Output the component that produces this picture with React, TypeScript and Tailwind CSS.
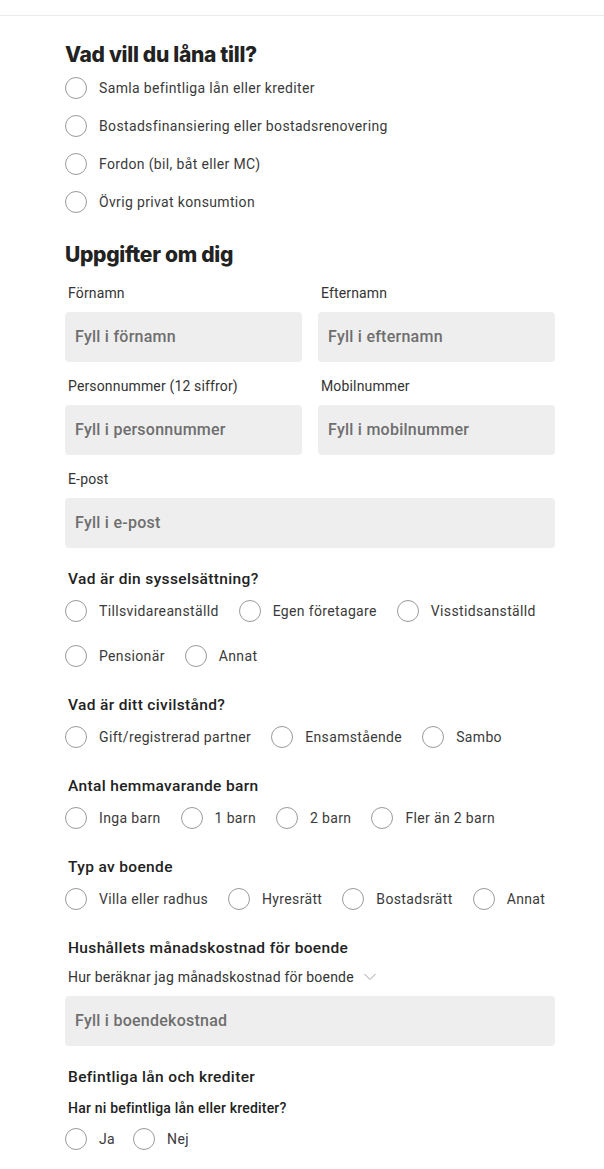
import React from "react";

const body = { fontFamily: "Roboto, 'Noto Sans', sans-serif" };
const head = { fontFamily: "Inter, 'Noto Sans', sans-serif" };

function Radio({ label, className = "" }: { label: string; className?: string }) {
  return (
    <label className={"flex items-center " + className}>
      <span className="w-[22px] h-[22px] rounded-full border border-[#9a9a9a] bg-white shrink-0" />
      <span className="ml-[12px] text-[14px] text-[#3a3a3a] tracking-[0.35px] leading-[20px]">{label}</span>
    </label>
  );
}

function SectionLabel({ children }: { children: React.ReactNode }) {
  return (
    <div className="pl-[3px] text-[15.5px] leading-[22px] font-medium text-[#222] tracking-[0.35px]">{children}</div>
  );
}

function Group({ label, options }: { label: string; options: string[] }) {
  return (
    <div className="mb-[17px]">
      <SectionLabel>{label}</SectionLabel>
      <div className="flex flex-wrap gap-y-[3px] gap-x-[20px]">
        {options.map((o) => (
          <Radio key={o} label={o} className="h-[42px]" />
        ))}
      </div>
    </div>
  );
}

function Input({ placeholder }: { placeholder: string }) {
  return (
    <div className="mt-[9px] h-[50px] rounded-[4px] bg-[#eeeeee] flex items-center px-[10px]">
      <span className="text-[16px] font-medium text-[#6e6e6e] tracking-[0.25px]">{placeholder}</span>
    </div>
  );
}

function Field({ label, placeholder, className = "" }: { label: string; placeholder: string; className?: string }) {
  return (
    <div className={className}>
      <div className="pl-[3px] text-[14px] leading-[20px] text-[#333] tracking-[0.15px]">{label}</div>
      <Input placeholder={placeholder} />
    </div>
  );
}

export default function App() {
  return (
    <div className="w-[604px] min-h-[1169px] bg-white" style={body}>
      <div className="h-[16px] border-b border-[#ebebeb]" />
      <div className="ml-[65px] w-[490px]">
        <h1 className="mt-[25px] text-[21px] leading-[28px] font-extrabold text-[#222] tracking-[-0.3px]" style={head}>
          Vad vill du låna till?
        </h1>
        <div className="flex flex-col">
          {[
            "Samla befintliga lån eller krediter",
            "Bostadsfinansiering eller bostadsrenovering",
            "Fordon (bil, båt eller MC)",
            "Övrig privat konsumtion",
          ].map((o) => (
            <Radio key={o} label={o} className="h-[38px]" />
          ))}
        </div>

        <h2 className="mt-[20px] text-[21px] leading-[28px] font-extrabold text-[#222] tracking-[-0.3px]" style={head}>
          Uppgifter om dig
        </h2>
        <div className="grid grid-cols-2 gap-x-[16px] gap-y-[14px] mt-[14px]">
          <Field label="Förnamn" placeholder="Fyll i förnamn" />
          <Field label="Efternamn" placeholder="Fyll i efternamn" />
          <Field label="Personnummer (12 siffror)" placeholder="Fyll i personnummer" />
          <Field label="Mobilnummer" placeholder="Fyll i mobilnummer" />
          <Field label="E-post" placeholder="Fyll i e-post" className="col-span-2" />
        </div>

        <div className="mt-[20px]">
          <Group label="Vad är din sysselsättning?" options={["Tillsvidareanställd", "Egen företagare", "Visstidsanställd", "Pensionär", "Annat"]} />
          <Group label="Vad är ditt civilstånd?" options={["Gift/registrerad partner", "Ensamstående", "Sambo"]} />
          <Group label="Antal hemmavarande barn" options={["Inga barn", "1 barn", "2 barn", "Fler än 2 barn"]} />
          <Group label="Typ av boende" options={["Villa eller radhus", "Hyresrätt", "Bostadsrätt", "Annat"]} />
        </div>

        <div>
          <SectionLabel>Hushållets månadskostnad för boende</SectionLabel>
          <div className="mt-[8px] pl-[3px] flex items-center text-[14px] leading-[20px] text-[#333] tracking-[0.2px]">
            <span>Hur beräknar jag månadskostnad för boende</span>
            <svg className="ml-[10px]" width="12" height="8" viewBox="0 0 12 8" fill="none">
              <path d="M0.5 1 L6 6.5 L11.5 1" stroke="#a0a0a0" strokeWidth="1" />
            </svg>
          </div>
          <Input placeholder="Fyll i boendekostnad" />
        </div>

        <div className="mt-[20px]">
          <SectionLabel>Befintliga lån och krediter</SectionLabel>
          <div className="mt-[10px] pl-[3px] text-[14px] leading-[20px] font-medium text-[#222] tracking-[0.2px]">
            Har ni befintliga lån eller krediter?
          </div>
          <div className="flex gap-x-[18px]">
            <Radio label="Ja" className="h-[42px]" />
            <Radio label="Nej" className="h-[42px]" />
          </div>
        </div>
      </div>
    </div>
  );
}
